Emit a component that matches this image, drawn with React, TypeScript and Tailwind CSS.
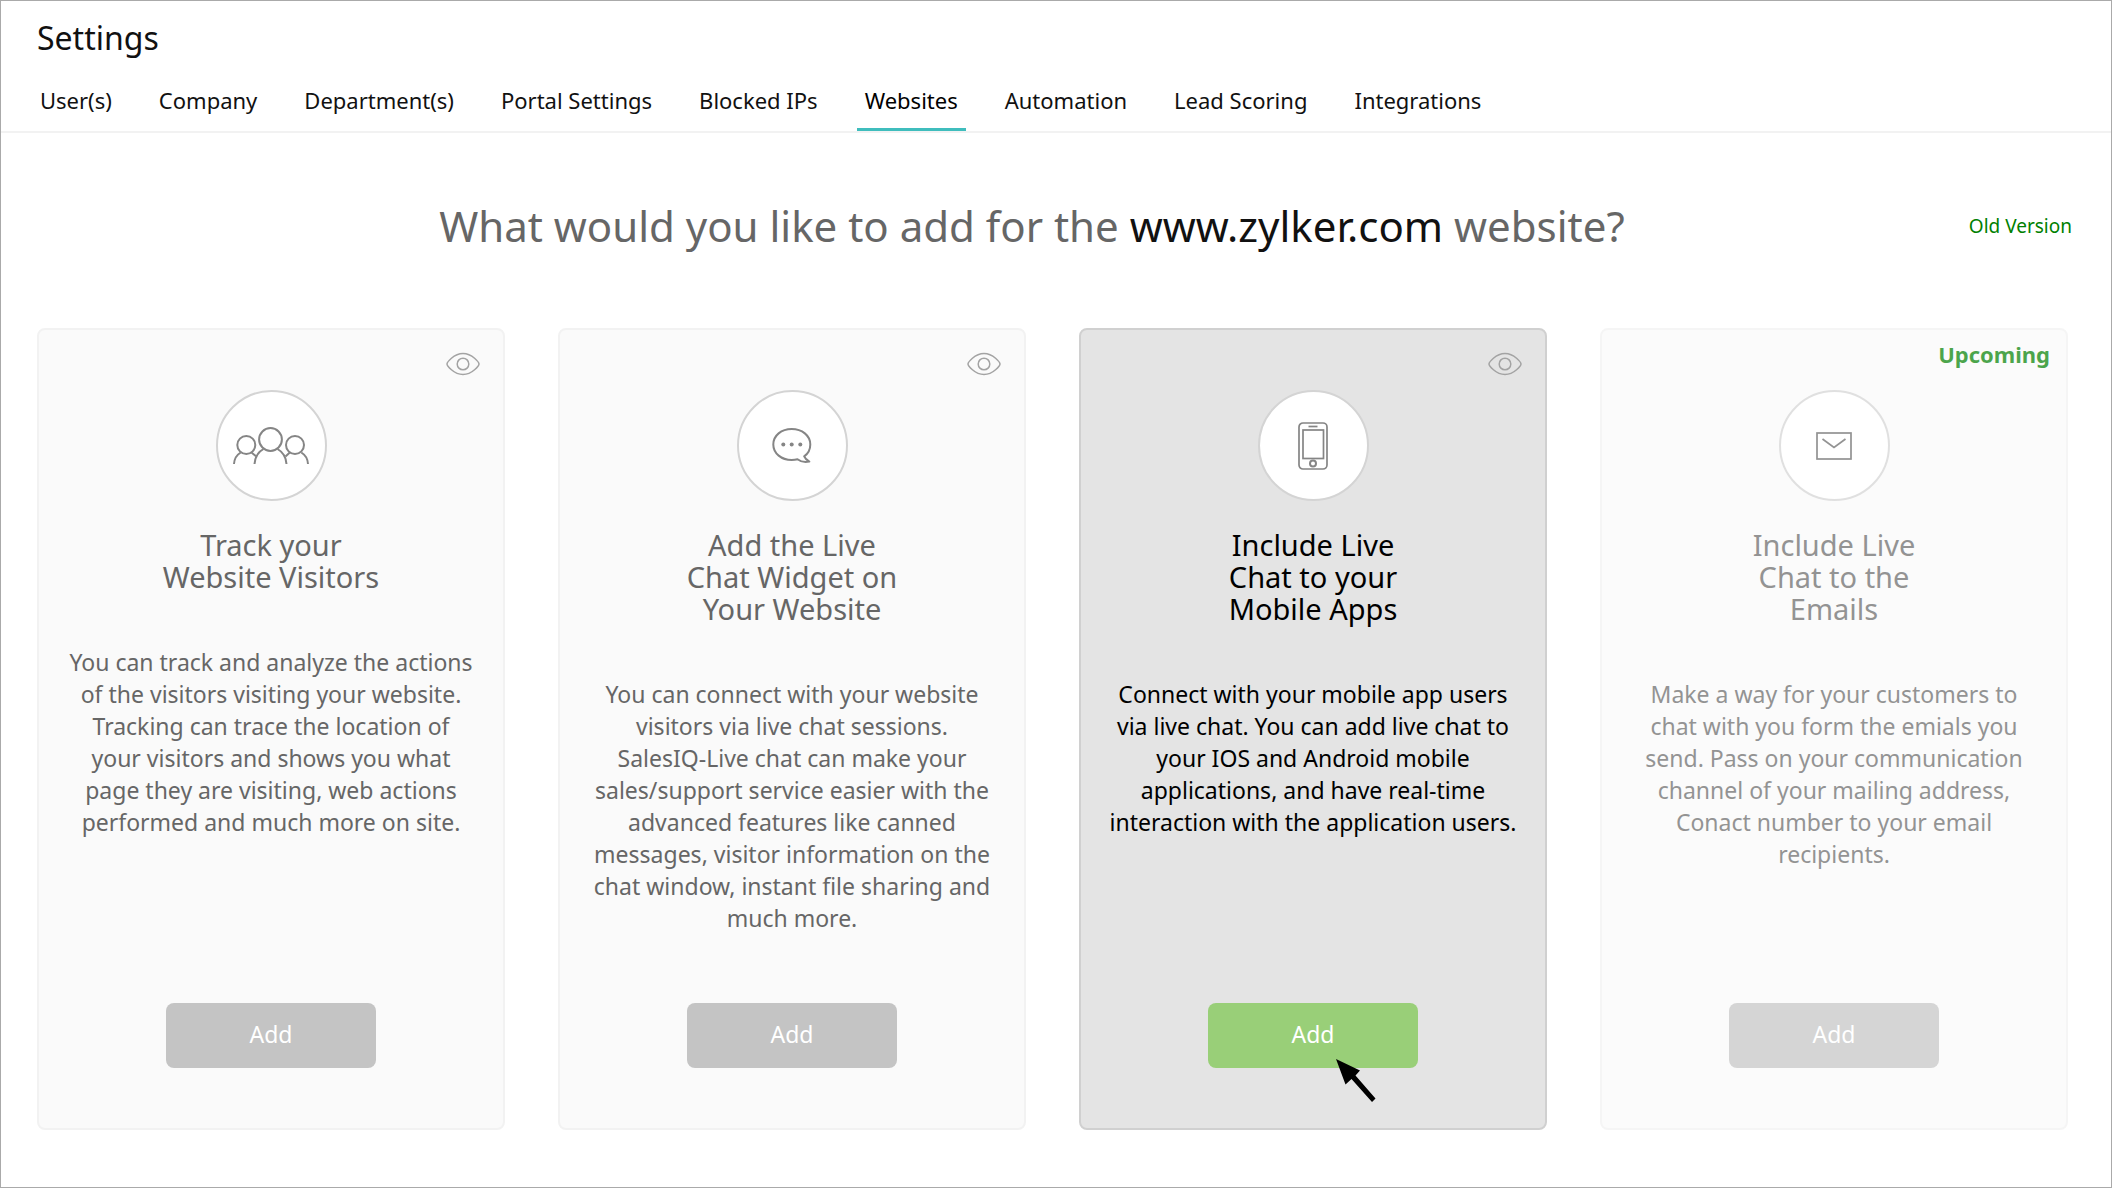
import { ReactNode } from 'react';
import clsx from 'clsx';

const tabs = [
  'User(s)',
  'Company',
  'Department(s)',
  'Portal Settings',
  'Blocked IPs',
  'Websites',
  'Automation',
  'Lead Scoring',
  'Integrations',
];

const VisitorsIcon = () => (
  <svg width="76" height="37" viewBox="0 0 76 37" fill="none" stroke="#858585" strokeWidth="2">
    <circle cx="37.5" cy="12.5" r="11.4" />
    <circle cx="13.3" cy="18" r="9" />
    <circle cx="62" cy="18" r="9" />
    <path d="M21.5 37c.4-6 3.6-12 9-15M53.5 37c-.4-6-3.6-12-9-15" />
    <path d="M1 37c.3-5 2.500-9 6.700-11.500M75 37c-.3-5-2.500-9-6.700-11.500" />
    <path d="M18.500 25.500l4.500 3.700M56.800 25.500l-4.300 4" />
  </svg>
);

const ChatIcon = () => (
  <svg width="40" height="37" viewBox="0 0 40 37" fill="none" stroke="#858585" strokeWidth="2">
    <path
      d="M25.500 32.300C28.500 34.600 33 35.600 37.300 34.600 34.800 33 33 31.300 32.200 29.300 36.300 26.500 38.300 22 38.300 17.500 38.300 8.500 30 2 19.700 2S1.300 8.500 1.300 17.500 9.500 33 19.700 33C21.800 33 23.700 32.800 25.500 32.300Z"
      strokeLinejoin="round"
    />
    <g fill="#858585" stroke="none">
      <circle cx="11.300" cy="17.500" r="2" />
      <circle cx="19.700" cy="17.500" r="2" />
      <circle cx="28.300" cy="17.500" r="2" />
    </g>
  </svg>
);

const MobileIcon = () => (
  <svg width="30" height="48" viewBox="0 0 30 48" fill="none" stroke="#858585" strokeWidth="1.700">
    <rect x="1" y="1" width="28" height="46" rx="4" />
    <rect x="5" y="8" width="20.500" height="28.500" />
    <path d="M10.500 4.500h9" />
    <circle cx="15" cy="41.500" r="3" strokeWidth="2" />
  </svg>
);

const MailIcon = () => (
  <svg width="36" height="28" viewBox="0 0 36 28" fill="none" stroke="#666" strokeWidth="1.700">
    <rect x="1" y="1" width="34" height="26" />
    <path d="M6.500 7l11.500 8.500L29.500 7" />
  </svg>
);

const EyeIcon = () => (
  <svg width="34" height="24" viewBox="0 0 34 24" fill="none" stroke="#a3a3a3" strokeWidth="1.500">
    <path d="M1 12C1 10.600 7.500 1.500 17 1.500S33 10.600 33 12 26.500 22.500 17 22.500 1 13.400 1 12Z" />
    <circle cx="17" cy="12" r="5.800" />
  </svg>
);

const PointerArrow = () => (
  <svg
    className="absolute left-32 top-14 pointer-events-none"
    width="40"
    height="44"
    viewBox="0 0 40 44"
    aria-hidden="true"
  >
    <path d="M0 0L24 11.500 19.500 16.500 39.500 39.500 36 43 15.500 20 9.500 25.500Z" fill="#000" />
  </svg>
);

interface Feature {
  title: string;
  description: string;
  icon: ReactNode;
  active?: boolean;
  upcoming?: boolean;
}

const features: Feature[] = [
  {
    title: 'Track your\nWebsite Visitors',
    description:
      'You can track and analyze the actions\nof the visitors visiting your website.\nTracking can trace the location of\nyour visitors and shows you what\npage they are visiting, web actions\nperformed and much more on site.',
    icon: <VisitorsIcon />,
  },
  {
    title: 'Add the Live\nChat Widget on\nYour Website',
    description:
      'You can connect with your website\nvisitors via live chat sessions.\nSalesIQ-Live chat can make your\nsales/support service easier with the\nadvanced features like canned\nmessages, visitor information on the\nchat window, instant file sharing and\nmuch more.',
    icon: <ChatIcon />,
  },
  {
    title: 'Include Live\nChat to your\nMobile Apps',
    description:
      'Connect with your mobile app users\nvia live chat. You can add live chat to\nyour IOS and Android mobile\napplications, and have real-time\ninteraction with the application users.',
    icon: <MobileIcon />,
    active: true,
  },
  {
    title: 'Include Live\nChat to the\nEmails',
    description:
      'Make a way for your customers to\nchat with you form the emials you\nsend. Pass on your communication\nchannel of your mailing address,\nConact number to your email\nrecipients.',
    icon: <MailIcon />,
    upcoming: true,
  },
];

const FeatureCard = ({ title, description, icon, active, upcoming }: Feature) => (
  <section
    className={clsx(
      'relative flex flex-col items-center rounded-lg border-2 px-4 pt-[60px] pb-[60px] text-center',
      active ? 'border-[#d0d0d0] bg-[#e4e4e4] text-black' : 'border-[#f2f2f2] bg-[#fafafa] text-[#666]',
      upcoming && 'opacity-70',
    )}
  >
    {upcoming ? (
      <span className="absolute right-4 top-2 text-[22px] leading-8 font-bold text-[#008000]">
        Upcoming
      </span>
    ) : (
      <button type="button" aria-label="Preview" className="absolute right-[23px] top-[22px]">
        <EyeIcon />
      </button>
    )}

    <div className="flex size-[111px] shrink-0 items-center justify-center rounded-full border-2 border-[#d4d4d4] bg-white">
      {icon}
    </div>

    <h2 className="mt-7 whitespace-pre-line text-[29px] leading-8">{title}</h2>
    <p className="mt-[53px] mb-[69px] whitespace-pre-line text-[23px] leading-8">{description}</p>

    <div className="relative mt-auto">
      <button
        type="button"
        disabled={upcoming}
        className={clsx(
          'h-[65px] w-[210px] rounded-lg pb-1 text-[23px] leading-8 text-white',
          active ? 'bg-[#99cf78]' : 'bg-[#c4c4c4]',
        )}
      >
        Add
      </button>
      {active && <PointerArrow />}
    </div>
  </section>
);

const App = () => {
  return (
    <div className="min-h-screen border border-[#aaa] bg-white font-['Noto_Sans',sans-serif] text-[#111]">
      <header className="border-b-2 border-[#f2f2f2] pt-[17px]">
        <h1 className="px-9 text-[32px] leading-10">Settings</h1>
        <nav className="mt-[26px] flex flex-wrap gap-x-[31px] px-[31px]">
          {tabs.map(tab => (
            <a
              key={tab}
              href="#"
              className={clsx(
                'border-b-3 px-2 pb-3 text-[22px] leading-8',
                tab === 'Websites' ? 'border-[#3fbdbd] text-black' : 'border-transparent',
              )}
            >
              {tab}
            </a>
          ))}
        </nav>
      </header>

      <main className="pl-9 pr-[43px]">
        <div className="mt-[69px] flex items-center">
          <h2 className="flex-1 pl-[58px] text-center text-[42px] leading-[48px] text-[#666]">
            What would you like to add for the <span className="text-[#111]">www.zylker.com</span>{' '}
            website?
          </h2>
          <a href="#" className="-mr-1 text-[19px] leading-6 text-[#008000]">
            Old Version
          </a>
        </div>

        <div className="mt-[78px] mb-14 grid grid-cols-1 gap-[53px] md:grid-cols-2 xl:grid-cols-4">
          {features.map(feature => (
            <FeatureCard key={feature.title} {...feature} />
          ))}
        </div>
      </main>
    </div>
  );
};

export default App;
